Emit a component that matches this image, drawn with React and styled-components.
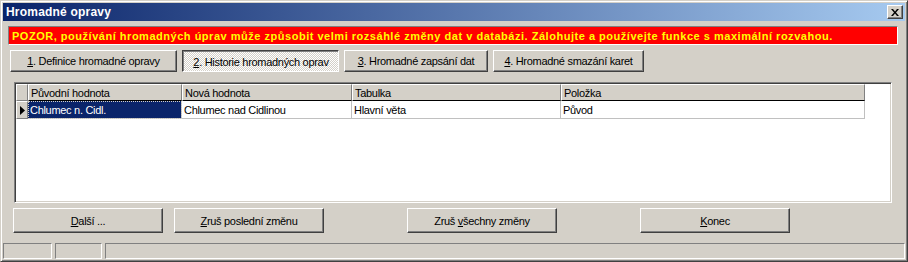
import React from "react";
import styled, { createGlobalStyle, css } from "styled-components";

const Global = createGlobalStyle`
  html, body { margin: 0; padding: 0; background: #D4D0C8; }
  body { font-family: "Liberation Sans", Arial, sans-serif; font-size: 11px; color: #000; letter-spacing: -0.3px; }
  * { box-sizing: border-box; }
`;

const Window = styled.div`
  width: 908px;
  height: 262px;
  background: #D4D0C8;
  border: 1px solid;
  border-color: #D4D0C8 #404040 #404040 #D4D0C8;
  box-shadow: inset 1px 1px #fff, inset -1px -1px #808080;
  padding: 2px;
  display: flex;
  flex-direction: column;
`;

const TitleBar = styled.div`
  height: 18px;
  flex: none;
  background: linear-gradient(to right, #0A246A, #A6CAF0);
  display: flex;
  align-items: center;
  justify-content: space-between;
  padding: 0 2px 0 3px;
`;

const TitleText = styled.span`
  color: #fff;
  font-weight: bold;
  font-size: 12px;
  letter-spacing: 0.2px;
`;

const CloseBtn = styled.div`
  width: 16px;
  height: 14px;
  background: #D4D0C8;
  border: 1px solid;
  border-color: #fff #404040 #404040 #fff;
  box-shadow: inset -1px -1px #808080;
  display: flex;
  align-items: center;
  justify-content: center;
`;

const Body = styled.div`
  flex: 1;
  display: flex;
  flex-direction: column;
  padding: 5px 5px 0 5px;
`;

const Banner = styled.div`
  height: 19px;
  margin-right: 2px;
  background: #FF0000;
  border: 1px solid;
  border-color: #808080 #fff #fff #808080;
  color: #FFFF00;
  font-weight: bold;
  font-size: 11px;
  display: flex;
  align-items: center;
  padding-left: 3px;
  white-space: nowrap;
  letter-spacing: 0.52px;
`;

const TabRow = styled.div`
  display: flex;
  gap: 5px;
  margin-top: 5px;
  padding-left: 2px;
`;

const raised = css`
  border: 1px solid;
  border-color: #fff #404040 #404040 #fff;
  box-shadow: inset -1px -1px #808080;
`;

const pressed = css`
  border: 1px solid;
  border-color: #404040 #fff #fff #404040;
  box-shadow: inset 1px 1px #808080;
  background-color: #fff;
  background-image:
    linear-gradient(45deg, #D4D0C8 25%, transparent 25%, transparent 75%, #D4D0C8 75%),
    linear-gradient(45deg, #D4D0C8 25%, transparent 25%, transparent 75%, #D4D0C8 75%);
  background-size: 2px 2px;
  background-position: 0 0, 1px 1px;
`;

const TabButton = styled.div`
  width: ${(p) => p.$w}px;
  height: 22px;
  display: flex;
  align-items: center;
  justify-content: center;
  background: #D4D0C8;
  ${(p) => (p.$active ? pressed : raised)}
  ${(p) => p.$active && css`padding-top: 1px; padding-left: 1px;`}
  white-space: nowrap;
`;

const U = styled.span`
  text-decoration: underline;
`;

const Grid = styled.div`
  margin: 10px 8px 0 6px;
  height: 121px;
  background: #fff;
  border: 1px solid;
  border-color: #808080 #fff #fff #808080;
  box-shadow: inset 1px 1px #404040, inset -1px -1px #D4D0C8;
  padding: 1px;
  overflow: hidden;
`;

const GridRow = styled.div`
  display: flex;
  height: ${(p) => (p.$header ? 17 : 18)}px;
`;

const HeadCell = styled.div`
  width: ${(p) => p.$w}px;
  flex: none;
  background: #D4D0C8;
  border-top: 1px solid #fff;
  border-left: 1px solid #fff;
  border-right: 1px solid #808080;
  border-bottom: 1px solid #000;
  padding-left: 2px;
  display: flex;
  align-items: center;
  white-space: nowrap;
`;

const Indicator = styled.div`
  width: 12px;
  flex: none;
  background: #D4D0C8;
  border-top: 1px solid #fff;
  border-left: 1px solid #fff;
  border-right: 1px solid #808080;
  border-bottom: 1px solid #808080;
  display: flex;
  align-items: center;
  justify-content: center;
`;

const Cell = styled.div`
  width: ${(p) => p.$w}px;
  flex: none;
  border-right: 1px solid #C0C0C0;
  border-bottom: 1px solid #C0C0C0;
  padding-left: 2px;
  display: flex;
  align-items: center;
  white-space: nowrap;
  ${(p) =>
    p.$selected &&
    css`
      background: #0A246A;
      color: #fff;
      outline: 1px dotted #D4D0C8;
      outline-offset: -1px;
    `}
`;

const ButtonRow = styled.div`
  display: flex;
  margin-top: 5px;
  padding-left: 5px;
`;

const PushButton = styled.div`
  width: 150px;
  height: 25px;
  margin-right: ${(p) => p.$mr}px;
  background: #D4D0C8;
  ${raised}
  display: flex;
  align-items: center;
  justify-content: center;
  white-space: nowrap;
`;

const StatusBar = styled.div`
  display: flex;
  gap: 3px;
  margin-top: 10px;
  height: 19px;
`;

const StatusPanel = styled.div`
  width: ${(p) => (p.$w ? `${p.$w}px` : "auto")};
  flex: ${(p) => (p.$w ? "none" : "1")};
  border: 1px solid;
  border-color: #808080 #fff #fff #808080;
`;

const cols = [
  { w: 154, h: "Původní hodnota", v: "Chlumec n. Cidl.", sel: true },
  { w: 170, h: "Nová hodnota", v: "Chlumec nad Cidlinou" },
  { w: 209, h: "Tabulka", v: "Hlavní věta" },
  { w: 304, h: "Položka", v: "Původ" },
];

export default function App() {
  return (
    <>
      <Global />
      <Window>
        <TitleBar>
          <TitleText>Hromadné opravy</TitleText>
          <CloseBtn>
            <svg width="8" height="7" viewBox="0 0 8 7">
              <path d="M0 0h2l2 2.5L6 0h2L5 3.5 8 7H6L4 4.5 2 7H0l3-3.5z" fill="#000" />
            </svg>
          </CloseBtn>
        </TitleBar>
        <Body>
          <Banner>
            POZOR, používání hromadných úprav může způsobit velmi rozsáhlé změny dat v databázi. Zálohujte a používejte funkce s maximální rozvahou.
          </Banner>
          <TabRow>
            <TabButton $w={167}>
              <span>
                <U>1</U>. Definice hromadné opravy
              </span>
            </TabButton>
            <TabButton $w={157} $active>
              <span>
                <U>2</U>. Historie hromadných oprav
              </span>
            </TabButton>
            <TabButton $w={144}>
              <span>
                <U>3</U>. Hromadné zapsání dat
              </span>
            </TabButton>
            <TabButton $w={151}>
              <span>
                <U>4</U>. Hromadné smazání karet
              </span>
            </TabButton>
          </TabRow>
          <Grid>
            <GridRow $header>
              <Indicator />
              {cols.map((c) => (
                <HeadCell key={c.h} $w={c.w}>
                  {c.h}
                </HeadCell>
              ))}
            </GridRow>
            <GridRow>
              <Indicator>
                <svg width="5" height="9" viewBox="0 0 5 9">
                  <path d="M0 0L5 4.5L0 9z" fill="#000" />
                </svg>
              </Indicator>
              {cols.map((c) => (
                <Cell key={c.h} $w={c.w} $selected={c.sel}>
                  {c.v}
                </Cell>
              ))}
            </GridRow>
          </Grid>
          <ButtonRow>
            <PushButton $mr={11}>
              <span>
                <U>D</U>alší ...
              </span>
            </PushButton>
            <PushButton $mr={83}>
              <span>
                <U>Z</U>ruš poslední změnu
              </span>
            </PushButton>
            <PushButton $mr={83}>
              <span>
                Zruš <U>v</U>šechny změny
              </span>
            </PushButton>
            <PushButton $mr={0}>
              <span>
                <U>K</U>onec
              </span>
            </PushButton>
          </ButtonRow>
        </Body>
        <StatusBar>
          <StatusPanel $w={49} />
          <StatusPanel $w={47} />
          <StatusPanel />
        </StatusBar>
      </Window>
    </>
  );
}
